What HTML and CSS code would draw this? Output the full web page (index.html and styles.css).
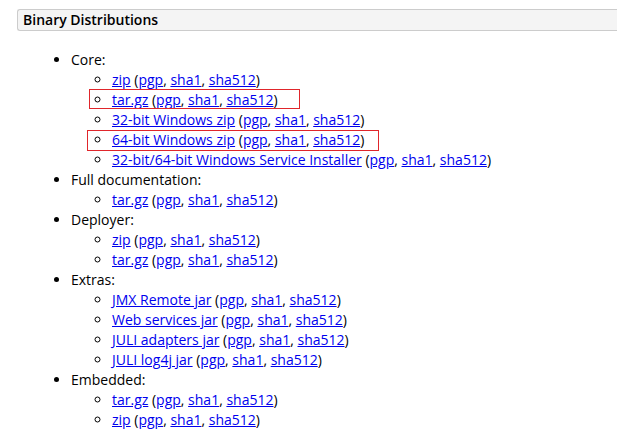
FILE: index.html
```html
<!DOCTYPE html>
<html>
<head>
<meta charset="utf-8">
<link rel="stylesheet" href="styles.css">
</head>
<body>
<div class="page">
  <h3 class="section">Binary Distributions</h3>
  <ul class="top">
    <li>Core:
      <ul class="sub">
        <li><a href="#">zip</a> (<a href="#">pgp</a>, <a href="#">sha1</a>, <a href="#">sha512</a>)</li>
        <li class="mark mark-a"><a href="#">tar.gz</a> (<a href="#">pgp</a>, <a href="#">sha1</a>, <a href="#">sha512</a>)</li>
        <li><a href="#">32-bit Windows zip</a> (<a href="#">pgp</a>, <a href="#">sha1</a>, <a href="#">sha512</a>)</li>
        <li class="mark mark-b"><a href="#">64-bit Windows zip</a> (<a href="#">pgp</a>, <a href="#">sha1</a>, <a href="#">sha512</a>)</li>
        <li><a href="#">32-bit/64-bit Windows Service Installer</a> (<a href="#">pgp</a>, <a href="#">sha1</a>, <a href="#">sha512</a>)</li>
      </ul>
    </li>
    <li>Full documentation:
      <ul class="sub">
        <li><a href="#">tar.gz</a> (<a href="#">pgp</a>, <a href="#">sha1</a>, <a href="#">sha512</a>)</li>
      </ul>
    </li>
    <li>Deployer:
      <ul class="sub">
        <li><a href="#">zip</a> (<a href="#">pgp</a>, <a href="#">sha1</a>, <a href="#">sha512</a>)</li>
        <li><a href="#">tar.gz</a> (<a href="#">pgp</a>, <a href="#">sha1</a>, <a href="#">sha512</a>)</li>
      </ul>
    </li>
    <li>Extras:
      <ul class="sub">
        <li><a href="#">JMX Remote jar</a> (<a href="#">pgp</a>, <a href="#">sha1</a>, <a href="#">sha512</a>)</li>
        <li><a href="#">Web services jar</a> (<a href="#">pgp</a>, <a href="#">sha1</a>, <a href="#">sha512</a>)</li>
        <li><a href="#">JULI adapters jar</a> (<a href="#">pgp</a>, <a href="#">sha1</a>, <a href="#">sha512</a>)</li>
        <li><a href="#">JULI log4j jar</a> (<a href="#">pgp</a>, <a href="#">sha1</a>, <a href="#">sha512</a>)</li>
      </ul>
    </li>
    <li>Embedded:
      <ul class="sub">
        <li><a href="#">tar.gz</a> (<a href="#">pgp</a>, <a href="#">sha1</a>, <a href="#">sha512</a>)</li>
        <li><a href="#">zip</a> (<a href="#">pgp</a>, <a href="#">sha1</a>, <a href="#">sha512</a>)</li>
      </ul>
    </li>
  </ul>
</div>
</body>
</html>
```
FILE: styles.css
```css
html, body {
  margin: 0;
  padding: 0;
  background: #fff;
}
body {
  font-family: "Open Sans", "Liberation Sans", sans-serif;
  font-size: 14px;
  line-height: 20px;
  color: #000;
}
.page {
  padding: 9px 0 0 17px;
  overflow: hidden;
}
.section {
  margin: 0 -10px 0 0;
  font-size: 14px;
  font-weight: 600;
  line-height: 20px;
  padding: 0 5px;
  background: #f4f4f4;
  border: 1px solid #cccccc;
  border-right: none;
  border-radius: 3px 0 0 3px;
  color: #000;
}
.top {
  margin: 19px 0 0 0;
  padding-left: 54px;
  list-style: disc;
}
.sub {
  margin: 0;
  padding-left: 41px;
  list-style: circle;
}
a {
  color: #0000ee;
  text-decoration: underline;
}
.mark {
  position: relative;
}
.mark::after {
  content: "";
  position: absolute;
  border: 1px solid #e0262b;
  pointer-events: none;
}
.mark-a::after {
  left: -23px;
  top: -1px;
  width: 209px;
  height: 18px;
}
.mark-b::after {
  left: -25px;
  top: 0px;
  width: 290px;
  height: 19px;
}
```
